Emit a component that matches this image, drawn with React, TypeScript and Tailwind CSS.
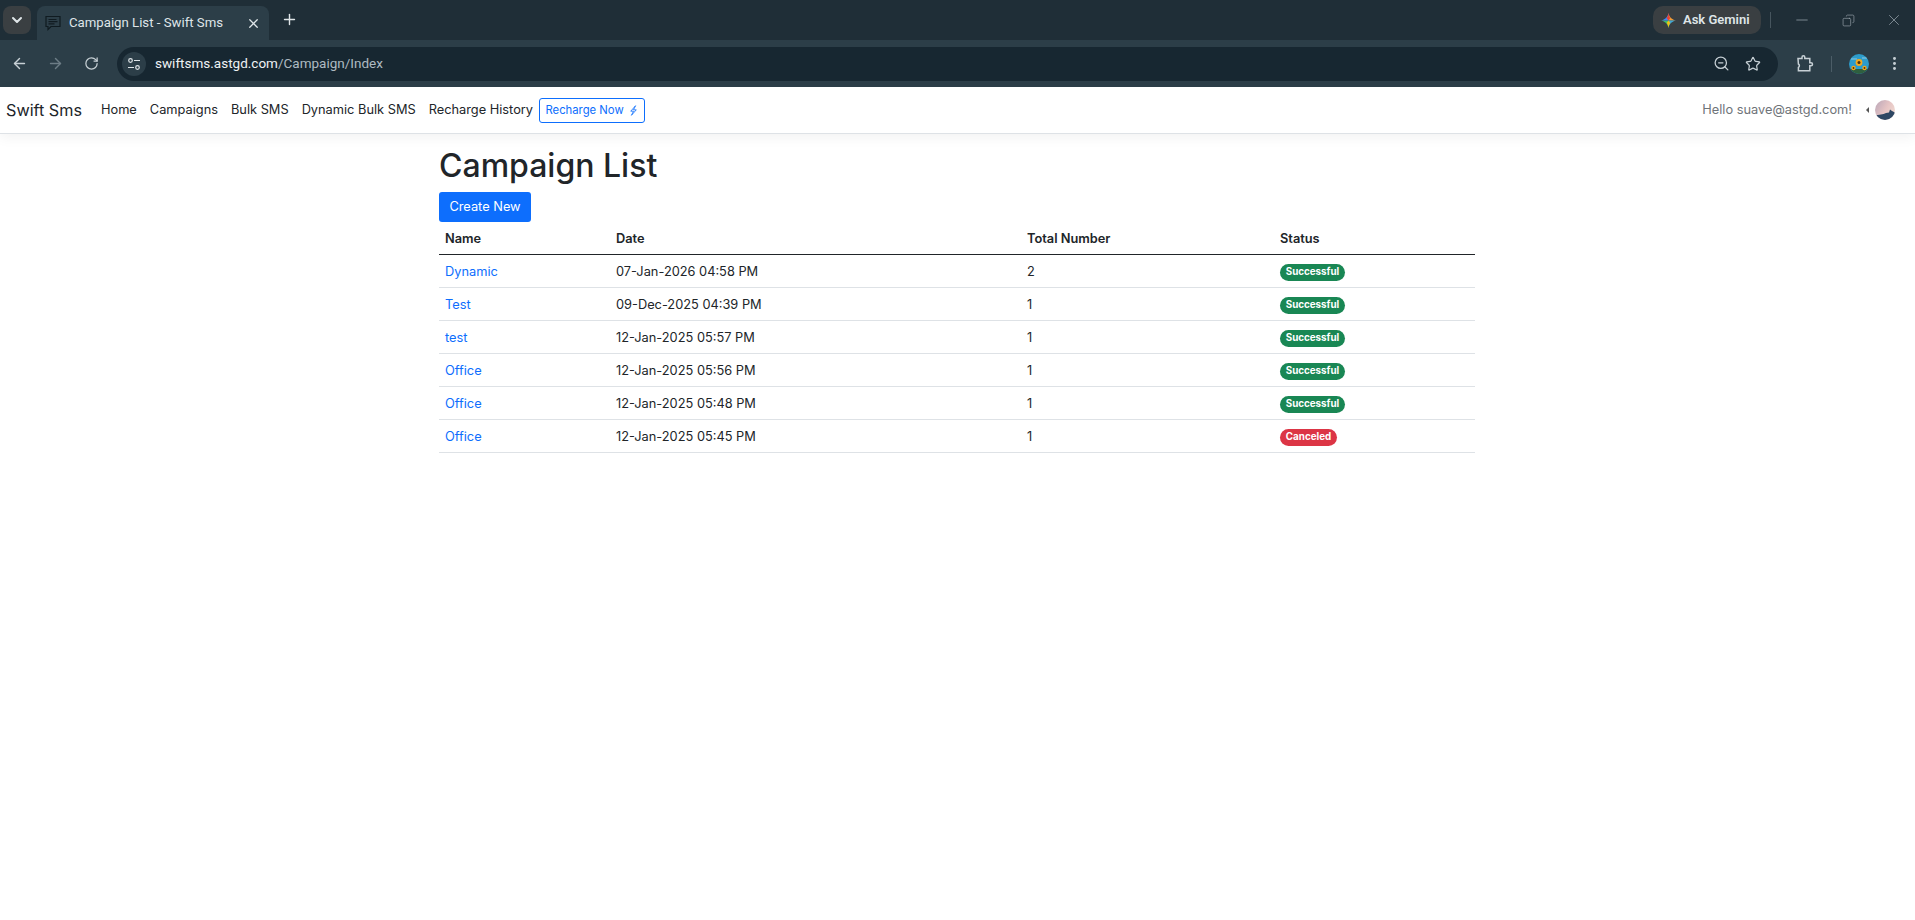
import { ArrowLeft, ArrowRight, ChevronDown, Copy, EllipsisVertical, Minus, Plus, RotateCw, Star, X, ZoomOut } from 'lucide-react';

const rows = [
  { name: 'Dynamic', date: '07-Jan-2026 04:58 PM', total: 2, status: 'Successful' },
  { name: 'Test', date: '09-Dec-2025 04:39 PM', total: 1, status: 'Successful' },
  { name: 'test', date: '12-Jan-2025 05:57 PM', total: 1, status: 'Successful' },
  { name: 'Office', date: '12-Jan-2025 05:56 PM', total: 1, status: 'Successful' },
  { name: 'Office', date: '12-Jan-2025 05:48 PM', total: 1, status: 'Successful' },
  { name: 'Office', date: '12-Jan-2025 05:45 PM', total: 1, status: 'Canceled' },
];

const navLinks = ['Home', 'Campaigns', 'Bulk SMS', 'Dynamic Bulk SMS', 'Recharge History'];

function TabStrip() {
  return (
    <div className="flex h-[40px] items-end bg-[#1f2e37] font-['Roboto',sans-serif] text-[#dfe5e8]">
      <div className="mb-[6px] ml-[3px] flex h-[28px] w-[28px] items-center justify-center rounded-lg bg-[#3a3f42]">
        <ChevronDown size={16} strokeWidth={3} />
      </div>
      <div className="ml-[6px] flex h-[34px] w-[232px] items-center rounded-t-lg bg-[#2c3e48] pl-[8px] pr-[8px]">
        <svg width="16" height="16" viewBox="0 0 16 16" fill="none" stroke="#101b21" strokeWidth="1.2">
          <path d="M1 1.5h14v10H6l-3 3v-3H1z" />
          <path d="M3.5 4.5h8M3.5 6.6h9M3.5 8.8h6" />
        </svg>
        <span className="ml-[8px] flex-1 text-[13.2px]">Campaign List - Swift Sms</span>
        <X size={15} strokeWidth={2} />
      </div>
      <div className="mb-[12px] ml-[12px] flex items-center">
        <Plus size={17} strokeWidth={2} />
      </div>
      <div className="flex-1" />
      <div className="mb-[6px] flex h-[28px] w-[108px] items-center rounded-[10px] bg-[#3a3f42] pl-[8px]">
        <svg width="15" height="15" viewBox="0 0 24 24">
          <path d="M12 0C13.2 6.5 17.5 10.800 24 12H12z" fill="#f29d38" />
          <path d="M24 12C17.5 13.2 13.2 17.5 12 24V12z" fill="#3fa7d6" />
          <path d="M12 24C10.800 17.5 6.500 13.2 0 12H12z" fill="#3ebb6a" />
          <path d="M0 12C6.500 10.800 10.800 6.500 12 0V12z" fill="#4285f4" />
          <path d="M12 0C12.500 4 13.500 6.500 15 8L12 12 9 8C10.500 6.500 11.500 4 12 0z" fill="#ea4335" />
          <path d="M12 24C11.500 20 10.500 17.500 9 16L12 12 15 16C13.500 17.500 12.500 20 12 24z" fill="#f4c20d" />
        </svg>
        <span className="ml-[7px] text-[13px] font-semibold">Ask Gemini</span>
      </div>
      <div className="mb-[12px] ml-[9px] h-[16px] w-px bg-[#46555e]" />
      <div className="mb-[11px] ml-[22px] flex w-[110px] items-center justify-between text-[#9aa6ad]">
        <Minus size={18} strokeWidth={1} />
        <Copy size={13} strokeWidth={1.2} className="-scale-x-100" />
        <X size={18} strokeWidth={1} />
      </div>
      <div className="w-[12px]" />
    </div>
  );
}

function Toolbar() {
  return (
    <div className="flex h-[47px] items-center bg-[#2c3e48] font-['Roboto',sans-serif] text-[#c7d0d5]">
      <ArrowLeft size={17} strokeWidth={2} className="ml-[11px]" />
      <ArrowRight size={17} strokeWidth={2} className="ml-[19px] text-[#6d7d86]" />
      <RotateCw size={15} strokeWidth={2} className="ml-[20px]" />
      <div className="ml-[18px] flex h-[34px] flex-1 items-center rounded-full bg-[#172731] pl-[5px] pr-[17px]">
        <div className="flex h-[24px] w-[24px] items-center justify-center rounded-full bg-[#2c3e48]">
          <svg width="14" height="14" viewBox="0 0 14 14" fill="none" stroke="#dfe5e8" strokeWidth="1.2">
            <circle cx="3.5" cy="3.5" r="1.8" />
            <path d="M7 3.5h6M1 10.5h6" />
            <circle cx="10.5" cy="10.5" r="1.8" />
          </svg>
        </div>
        <span className="ml-[9px] flex-1 text-[13.5px] text-[#aebac1]">
          <span className="text-[#eef2f4]">swiftsms.astgd.com</span>/Campaign/Index
        </span>
        <ZoomOut size={17} strokeWidth={1.8} />
        <Star size={16} strokeWidth={1.8} className="ml-[15px]" />
      </div>
      <svg width="18" height="18" viewBox="0 0 18 18" fill="none" stroke="#c7d0d5" strokeWidth="1.5" className="ml-[18px]">
        <path d="M2 3.5h4V2.2a1.4 1.4 0 0 1 2.8 0v1.3h5v4.3h1.2a1.5 1.5 0 0 1 0 3h-1.2v5H2.4v-3.3a2 2 0 0 0 1-1.7 2 2 0 0 0-1-1.8z" />
      </svg>
      <div className="ml-[17px] h-[16px] w-px bg-[#4c5d67]" />
      <svg width="20" height="20" viewBox="0 0 20 20" className="ml-[17px]">
        <defs>
          <clipPath id="sun"><circle cx="10" cy="10" r="10" /></clipPath>
        </defs>
        <g clipPath="url(#sun)">
          <rect width="20" height="20" fill="#2d9ccb" />
          <path d="M2 5h6M13 4h5" stroke="#a8d8ec" strokeWidth="0.8" />
          <rect y="15" width="20" height="5" fill="#2f5f3f" />
          <circle cx="10" cy="8.5" r="3.4" fill="#f2a81d" />
          <circle cx="10" cy="8.5" r="1.5" fill="#4b3010" />
          <circle cx="4.5" cy="14" r="2.2" fill="#f2a81d" />
          <circle cx="4.5" cy="14" r="0.9" fill="#4b3010" />
          <circle cx="15.5" cy="14" r="2.2" fill="#f2a81d" />
          <circle cx="15.5" cy="14" r="0.9" fill="#4b3010" />
        </g>
      </svg>
      <EllipsisVertical size={17} strokeWidth={2.2} className="ml-[17px]" />
      <div className="w-[12px]" />
    </div>
  );
}

function Navbar() {
  return (
    <nav className="flex h-[47px] items-center border-b border-[#dee2e6] bg-white pl-[6px] pr-[20px] shadow-[0_4px_12px_rgba(0,0,0,0.05)]">
      <span className="text-[16.2px] text-[#212529]">Swift Sms</span>
      <div className="ml-[19px] flex items-center gap-[13px] text-[12.8px] text-[#212529]">
        {navLinks.map((link) => (
          <a key={link}>{link}</a>
        ))}
      </div>
      <button className="ml-[6px] flex h-[25px] w-[106px] items-center justify-center gap-[4px] rounded-[3px] border border-[#0d6efd] text-[11.3px] text-[#0d6efd]">
        Recharge Now
        <svg width="11" height="11" viewBox="0 0 16 16" fill="none" stroke="#0d6efd" strokeWidth="1.2">
          <path d="M11 1 4 9h4l-3 6 7-8H8z" />
        </svg>
      </button>
      <div className="flex-1" />
      <span className="text-[12.8px] text-[#6f7479]">Hello suave@astgd.com!</span>
      <span className="ml-[14px] h-0 w-0 border-y-[3px] border-r-[3px] border-y-transparent border-r-[#555]" />
      <svg width="20" height="20" viewBox="0 0 20 20" className="ml-[6px]">
        <defs>
          <linearGradient id="sky" x1="0" y1="0" x2="1" y2="0.6">
            <stop offset="0" stopColor="#b9a6b8" />
            <stop offset="0.6" stopColor="#e6c4c4" />
            <stop offset="1" stopColor="#efd8d0" />
          </linearGradient>
          <clipPath id="av"><circle cx="10" cy="10" r="10" /></clipPath>
        </defs>
        <g clipPath="url(#av)">
          <rect width="20" height="20" fill="url(#sky)" />
          <path d="M0 15c4 0 8-.5 11-2l3-.5 1-3 2 1.500 3 1.500v8H0z" fill="#2e4763" />
        </g>
      </svg>
    </nav>
  );
}

function StatusBadge({ status }: { status: string }) {
  const color = status === 'Successful' ? 'bg-[#198754] w-[65px]' : 'bg-[#dc3545] w-[57px]';
  return (
    <span className={`flex h-[17px] items-center justify-center rounded-full text-[9.8px] font-bold text-white ${color}`}>
      {status}
    </span>
  );
}

export default function App() {
  return (
    <div className="min-h-[920px] bg-white font-['Inter',sans-serif]">
      <TabStrip />
      <Toolbar />
      <Navbar />
      <main className="ml-[439px] w-[1036px] text-[#212529]">
        <h1 className="mt-[13px] text-[32px] font-medium leading-[38px]">Campaign List</h1>
        <button className="mt-[7px] block h-[30px] w-[92px] rounded-[3px] bg-[#0d6efd] text-[12.8px] text-white">
          Create New
        </button>
        <table className="w-full table-fixed border-collapse text-[12.8px]">
          <colgroup>
            <col className="w-[171px]" />
            <col className="w-[411px]" />
            <col className="w-[253px]" />
            <col />
          </colgroup>
          <thead>
            <tr className="h-[32px] border-b border-[#212529] text-left">
              <th className="px-[6px] pt-[2px] font-semibold">Name</th>
              <th className="px-[6px] pt-[2px] font-semibold">Date</th>
              <th className="px-[6px] pt-[2px] font-semibold">Total Number</th>
              <th className="px-[6px] pt-[2px] font-semibold">Status</th>
            </tr>
          </thead>
          <tbody>
            {rows.map((row) => (
              <tr key={row.date} className="h-[33px] border-b border-[#dee2e6]">
                <td className="px-[6px] pt-[2px] text-[#0d6efd]">{row.name}</td>
                <td className="px-[6px] pt-[2px]">{row.date}</td>
                <td className="px-[6px] pt-[2px]">{row.total}</td>
                <td className="px-[6px] pt-[4px]">
                  <StatusBadge status={row.status} />
                </td>
              </tr>
            ))}
          </tbody>
        </table>
      </main>
    </div>
  );
}
